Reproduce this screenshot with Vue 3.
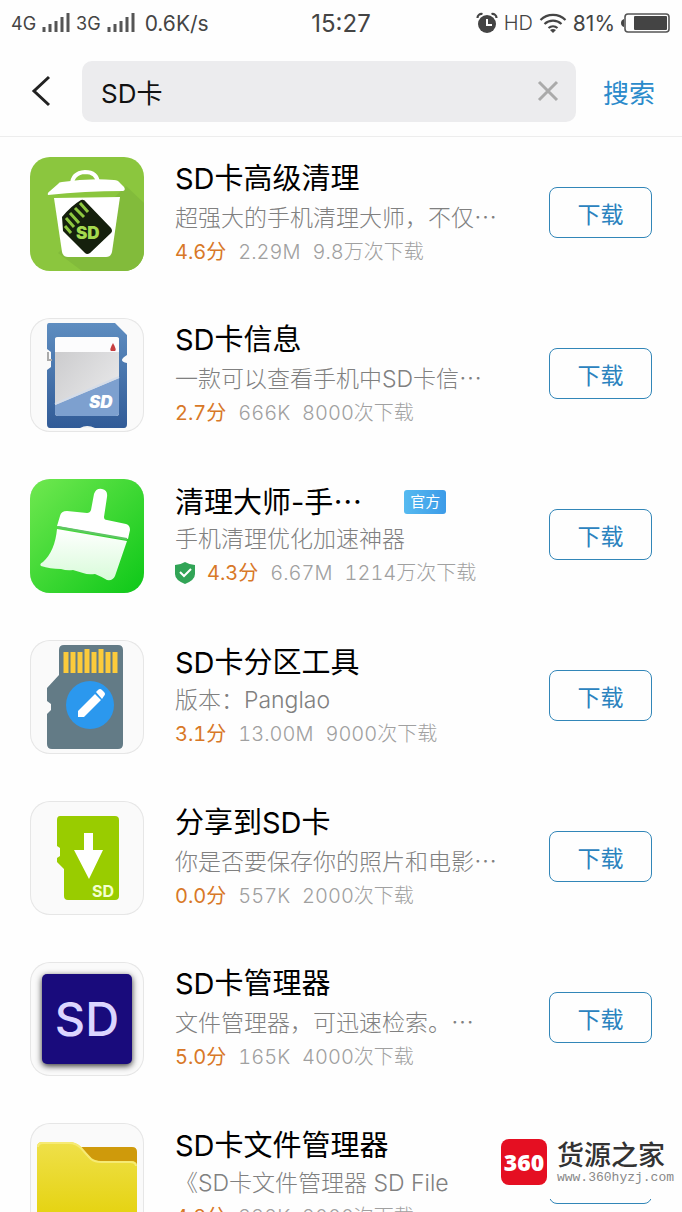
<template>
  <div class="page">
    <div class="status-bar">
      <div class="status-left">
        <span class="net">4G</span>
        <svg class="signal" viewBox="0 0 28 20">
          <path d="M2 14v5M8 11v8M14 8v11M20 4v15M26 0v19" />
        </svg>
        <span class="net">3G</span>
        <svg class="signal" viewBox="0 0 28 20">
          <path d="M2 14v5M8 11v8M14 8v11M20 4v15M26 0v19" />
        </svg>
        <span class="speed">0.6K/s</span>
      </div>
      <span class="clock">15:27</span>
      <div class="status-right">
        <svg class="alarm" viewBox="0 0 22 22">
          <circle cx="11" cy="12" r="9" fill="#444" />
          <path d="M1.500 6a4 4 0 0 1 5-4M15.500 2a4 4 0 0 1 5 4" fill="none" stroke="#444" stroke-width="2.200" />
          <path d="M11 7v6h5" fill="none" stroke="#fff" stroke-width="2" />
        </svg>
        <span class="hd">HD</span>
        <svg class="wifi" viewBox="0 0 28 20">
          <path d="M1.500 7a18 18 0 0 1 25 0M5.500 11a12.500 12.500 0 0 1 17 0M9.500 15a7 7 0 0 1 9 0" fill="none" stroke="#444" stroke-width="2.200" />
          <path d="M11 17q3-2 6 0l-3 3z" fill="#444" />
        </svg>
        <span class="percent">81%</span>
        <svg class="battery" viewBox="0 0 50 20">
          <path d="M3 6q-3 1-3 4t3 4z" fill="#444" />
          <rect x="4" y="1" width="44" height="18" rx="3" fill="none" stroke="#555" stroke-width="1.600" />
          <rect x="13" y="3" width="33" height="14" rx="1" fill="#444" />
        </svg>
      </div>
    </div>

    <form class="search-bar" @submit.prevent>
      <button class="back" type="button" aria-label="返回">
        <svg viewBox="0 0 20 32">
          <path d="M18 2L3 16l15 14" />
        </svg>
      </button>
      <div class="search-box">
        <input v-model="keyword" type="text" aria-label="搜索" />
        <button class="clear" type="button" aria-label="清除" @click="keyword = ''">
          <svg viewBox="0 0 22 22">
            <path d="M2 2l18 18M20 2L2 20" />
          </svg>
        </button>
      </div>
      <button class="search-btn" type="submit">搜索</button>
    </form>

    <ul class="list">
      <li v-for="item in list" :key="item.name" class="item">
        <div :class="['logo', item.icon]">
          <svg v-if="item.icon === 'trash'" viewBox="0 0 114 114">
            <path d="M96 29l18 17v68H52L28 96z" fill="#82bb3b" />
            <path d="M42 28q0-12 13-13 12 0 13 11" fill="none" stroke="#fff" stroke-width="4" />
            <path d="M18 38q-1-2 2-4l8-7q1-2 4-2 27-4 52-2 4 0 6 3l4 4q2 3-1 4-38 0-75 4z" fill="#fff" />
            <path d="M24 41l66-1-8 55q-1 5-6 5H38q-5 0-6-5z" fill="#fff" />
            <path d="M51 43q3-1 5 2l25 26q2 3 0 5L60 96q-3 2-5 0L33 74l-1-14q9-11 19-17z" fill="#15200d" />
            <path d="M35 69l6 7M36 61l8 9M40 56l9 10M45 51l9 9M50 46l8 9" stroke="#8dc740" stroke-width="3" />
            <text x="46" y="82" font-size="17" font-weight="900" fill="#a4d94f">SD</text>
          </svg>

          <svg v-else-if="item.icon === 'card'" viewBox="0 0 114 114">
            <defs>
              <linearGradient id="cardBlue" x1="0" y1="0" x2="0" y2="1">
                <stop offset="0" stop-color="#5e8dc0" />
                <stop offset="1" stop-color="#315b97" />
              </linearGradient>
              <linearGradient id="cardGray" x1="0" y1="0" x2="1" y2="1">
                <stop offset="0" stop-color="#c8c8ca" />
                <stop offset="1" stop-color="#eeeeef" />
              </linearGradient>
            </defs>
            <path d="M19 5h66l12 12v20q-5 3-5 5t5 3v61q0 4-3 4H20q-3 0-3-4V52l4-3V34l-4-3V8q0-3 2-3z" fill="url(#cardBlue)" />
            <path d="M18 34v8h4" fill="none" stroke="#aaa" stroke-width="2" />
            <rect x="25" y="19" width="64" height="79" rx="3" fill="url(#cardGray)" />
            <path d="M25 34V21q0-2 3-2h58q3 0 3 2v13z" fill="#fcfcfd" />
            <path d="M25 87l64-27v35q0 3-3 3H28q-3 0-3-3z" fill="#7da0cf" />
            <path d="M25 86l64-27" stroke="#d4dce8" stroke-width="2" />
            <path d="M83 25q4 7 2 8h-4q-2-1 2-8z" fill="#c73f42" />
            <path d="M50 110q7-4 15 0z" fill="#f3f3f3" />
            <text x="59" y="90" font-size="17" font-weight="900" font-style="italic" fill="#fff">SD</text>
          </svg>

          <svg v-else-if="item.icon === 'broom'" viewBox="0 0 114 114">
            <defs>
              <linearGradient id="broomBg" x1="0" y1="0" x2="1" y2="1">
                <stop offset="0" stop-color="#70e850" />
                <stop offset="1" stop-color="#0dc818" />
              </linearGradient>
              <linearGradient id="broomHair" x1="0" y1="0" x2="0" y2="1">
                <stop offset="0" stop-color="#fff" />
                <stop offset="1" stop-color="#d8fbd9" />
              </linearGradient>
            </defs>
            <rect width="114" height="114" fill="url(#broomBg)" />
            <path d="M64 15q2-6 8-5 6 1 5 8l-3 20q0 3 3 3l19 4q4 1 4 6l-2 9-71-13 3-10q1-5 7-5l20 2q3 0 4-3z" fill="#fff" />
            <path d="M27 50l70 12-12 35q-2 5-8 4-7-4-12-6-7 1-12-1l-10-3q-6 1-12-1-11 0-20-3-2-2 2-4 12-11 14-33z" fill="url(#broomHair)" />
            <path d="M28 48l69 12" stroke="#5fc565" stroke-width="2" />
          </svg>

          <svg v-else-if="item.icon === 'edit'" viewBox="0 0 114 114">
            <path d="M34 5h54q5 0 5 5v94q0 5-5 5H22q-5 0-5-5V74l4-4v-6l-4-3V48l12-13V10q0-5 5-5z" fill="#637b86" />
            <path d="M36 12v21M43 12v21M50 12v21M57 9v24M64 12v21M71 9v24M78 12v21M85 12v21" stroke="#fccb3b" stroke-width="5" />
            <circle cx="60" cy="65" r="24" fill="#2b98ee" />
            <path d="M48 71l17-17 6 6-17 17h-6zM66 52l2-2q2-2 4 0l2 2q2 2 0 4l-2 3z" fill="#fff" />
          </svg>

          <svg v-else-if="item.icon === 'share'" viewBox="0 0 114 114">
            <path d="M30 15h55q4 0 4 4v76q0 4-4 4H38q-4 0-4-4V68l-7-7v-4l3-2v-8l-3-2V19q0-4 3-4z" fill="#9c0" />
            <path d="M54 32h9v17h10L59 78 44 49h10z" fill="#fff" />
            <text x="62" y="96" font-size="16" font-weight="700" fill="#f4ffd0">SD</text>
          </svg>

          <span v-else-if="item.icon === 'manager'" class="tile">SD</span>

          <svg v-else viewBox="0 0 114 114">
            <defs>
              <linearGradient id="folder" x1="0" y1="0" x2="0" y2="1">
                <stop offset="0" stop-color="#efe04a" />
                <stop offset="1" stop-color="#e2cf00" />
              </linearGradient>
            </defs>
            <path d="M40 24h62q5 0 5 5v30H40z" fill="#cf9a0b" />
            <path d="M7 114V24q0-5 5-5h27q7 0 12 5 6 7 10 11 4 3 10 3h30q6 0 6 5v71z" fill="url(#folder)" />
            <path d="M8 24q0-4 5-4h26q7 0 12 5 6 7 10 11 4 3 10 3h29q6 0 6 4" fill="none" stroke="#f6ea74" stroke-width="2" />
          </svg>
        </div>

        <div class="info">
          <div class="title-row">
            <h2>{{ item.name }}<span v-if="item.cutName" class="more">…</span></h2>
            <span v-if="item.official" class="official">官方</span>
          </div>
          <p class="desc">{{ item.desc }}<span v-if="item.cutDesc" class="more">…</span></p>
          <p class="meta">
            <svg v-if="item.official" class="shield" viewBox="0 0 20 22">
              <path d="M10 0q5 3 10 3v9q0 6-10 10Q0 18 0 12V3q5 0 10-3z" fill="#31a456" />
              <path d="M5 10l4 4 7-7" fill="none" stroke="#fff" stroke-width="2" />
            </svg>
            <span class="score">{{ item.score }}分</span>
            <span>{{ item.size }}</span>
            <span>{{ item.count }}次下载</span>
          </p>
        </div>
        <button class="download" type="button">下载</button>
      </li>
    </ul>

    <div class="watermark">
      <span class="mark">360</span>
      <div class="mark-text">
        <strong>货源之家</strong>
        <span>www.360hyzj.com</span>
      </div>
    </div>
  </div>
</template>

<script setup>
import { ref } from "vue";

const keyword = ref("SD卡");

// 搜索结果
const list = [
  { icon: "trash", name: "SD卡高级清理", desc: "超强大的手机清理大师，不仅", cutDesc: true, score: "4.6", size: "2.29M", count: "9.8万" },
  { icon: "card", name: "SD卡信息", desc: "一款可以查看手机中SD卡信", cutDesc: true, score: "2.7", size: "666K", count: "8000" },
  { icon: "broom", name: "清理大师-手", cutName: true, official: true, desc: "手机清理优化加速神器", score: "4.3", size: "6.67M", count: "1214万" },
  { icon: "edit", name: "SD卡分区工具", desc: "版本：Panglao", score: "3.1", size: "13.00M", count: "9000" },
  { icon: "share", name: "分享到SD卡", desc: "你是否要保存你的照片和电影", cutDesc: true, score: "0.0", size: "557K", count: "2000" },
  { icon: "manager", name: "SD卡管理器", desc: "文件管理器，可迅速检索。", cutDesc: true, score: "5.0", size: "165K", count: "4000" },
  { icon: "folder", name: "SD卡文件管理器", desc: "《SD卡文件管理器 SD File", score: "4.8", size: "332K", count: "2000" },
];
</script>

<style>
body {
  margin: 0;
  background: #fff;
}
</style>

<style scoped>
.page {
  position: relative;
  display: flex;
  flex-direction: column;
  height: 100vh;
  overflow: hidden;
  background: #fefefe;
  color: #000;
  font-family: Inter, "Noto Sans CJK SC", sans-serif;
}
button {
  padding: 0;
  border: 0;
  background: none;
  font-family: inherit;
  cursor: pointer;
}
svg {
  display: block;
  flex-shrink: 0;
}
.status-bar {
  display: grid;
  grid-template-columns: 1fr auto 1fr;
  align-items: center;
  flex-shrink: 0;
  height: 46px;
  padding: 0 11px;
  color: #444;
}
.status-left,
.status-right {
  display: flex;
  align-items: center;
  gap: 6px;
}
.status-right {
  justify-content: flex-end;
}
.net {
  font-size: 18px;
}
.signal {
  width: 28px;
  height: 20px;
  fill: none;
  stroke: #555;
  stroke-width: 3;
}
.speed {
  margin-left: 4px;
  font-size: 21px;
}
.clock {
  font-size: 24px;
}
.alarm {
  width: 22px;
  height: 22px;
}
.hd {
  font-size: 20px;
  font-weight: 300;
}
.wifi {
  width: 28px;
  height: 20px;
}
.percent {
  font-size: 21px;
}
.battery {
  width: 50px;
  height: 20px;
}
.search-bar {
  display: flex;
  align-items: center;
  flex-shrink: 0;
  height: 90px;
  margin: 0;
  border-bottom: 1px solid #ededed;
}
.back {
  display: flex;
  justify-content: center;
  width: 82px;
}
.back svg {
  width: 20px;
  height: 32px;
  fill: none;
  stroke: #222;
  stroke-width: 3;
}
.search-box {
  display: flex;
  align-items: center;
  flex: 1;
  min-width: 0;
  height: 61px;
  padding: 0 17px 0 19px;
  border-radius: 10px;
  background: #ececee;
}
.search-box input {
  flex: 1;
  min-width: 0;
  padding: 0;
  border: 0;
  outline: none;
  background: none;
  color: #111;
  font-family: inherit;
  font-size: 26px;
}
.clear svg {
  width: 22px;
  height: 22px;
  fill: none;
  stroke: #aaa;
  stroke-width: 3;
}
.search-btn {
  width: 106px;
  color: #2b8bcb;
  font-size: 26px;
}
.list {
  margin: -4px 0 0;
  padding: 0;
  list-style: none;
}
.item {
  display: flex;
  align-items: center;
  height: 161px;
  padding: 0 30px;
  box-sizing: border-box;
}
.logo {
  display: flex;
  align-items: center;
  justify-content: center;
  flex-shrink: 0;
  width: 114px;
  height: 114px;
  overflow: hidden;
  border-radius: 20px;
  background: #fafafa;
  box-shadow: inset 0 0 0 1px #e6e6e6;
}
.logo svg {
  width: 114px;
  height: 114px;
}
.logo.trash {
  background: #8bc63e;
  box-shadow: none;
}
.tile {
  width: 90px;
  height: 90px;
  border-radius: 5px;
  background: #190b7c;
  box-shadow: 0 2px 6px #333;
  color: #dcd6ff;
  font-size: 47px;
  font-weight: 500;
  line-height: 90px;
  text-align: center;
}
.info {
  flex: 1;
  min-width: 0;
  padding-left: 31px;
  white-space: nowrap;
}
.title-row {
  display: flex;
  align-items: center;
  gap: 42px;
  height: 42px;
}
h2 {
  margin: 0;
  font-size: 29px;
  font-weight: 400;
  line-height: 42px;
}
.more {
  font-family: "Noto Sans CJK SC", sans-serif;
}
.official {
  width: 42px;
  border-radius: 3px;
  background: linear-gradient(90deg, #56baf0, #3c9be8);
  color: #fff;
  font-size: 15px;
  line-height: 24px;
  text-align: center;
}
.desc {
  margin: 0;
  color: #808080;
  font-size: 23px;
  font-weight: 300;
  line-height: 32px;
}
.meta {
  display: flex;
  align-items: center;
  gap: 12px;
  margin: 0;
  color: #a0a0a0;
  font-size: 20px;
  font-variant-numeric: tabular-nums;
  font-weight: 300;
  line-height: 36px;
}
.score {
  color: #d87827;
  font-weight: 400;
}
.shield {
  width: 20px;
  height: 22px;
}
.download {
  flex-shrink: 0;
  width: 103px;
  height: 51px;
  margin-bottom: 2px;
  border: 1px solid #3286b8;
  border-radius: 8px;
  color: #2b83bf;
  font-size: 23px;
}
.watermark {
  position: absolute;
  right: 0;
  bottom: 13px;
  display: flex;
  align-items: center;
  gap: 10px;
  height: 74px;
  padding: 0 8px 0 6px;
  background: #fefefe;
}
.mark {
  width: 46px;
  border-radius: 8px;
  background: #e50f22;
  color: #fff;
  font-family: "Open Sans", sans-serif;
  font-size: 23px;
  font-weight: 800;
  line-height: 46px;
  text-align: center;
}
.mark-text {
  display: flex;
  flex-direction: column;
  color: #888;
  font-family: "Liberation Mono", monospace;
  font-size: 13px;
  line-height: 16px;
}
.mark-text strong {
  color: #333;
  font-family: "Noto Sans CJK SC", sans-serif;
  font-size: 27px;
  font-weight: 500;
  line-height: 32px;
}
</style>
